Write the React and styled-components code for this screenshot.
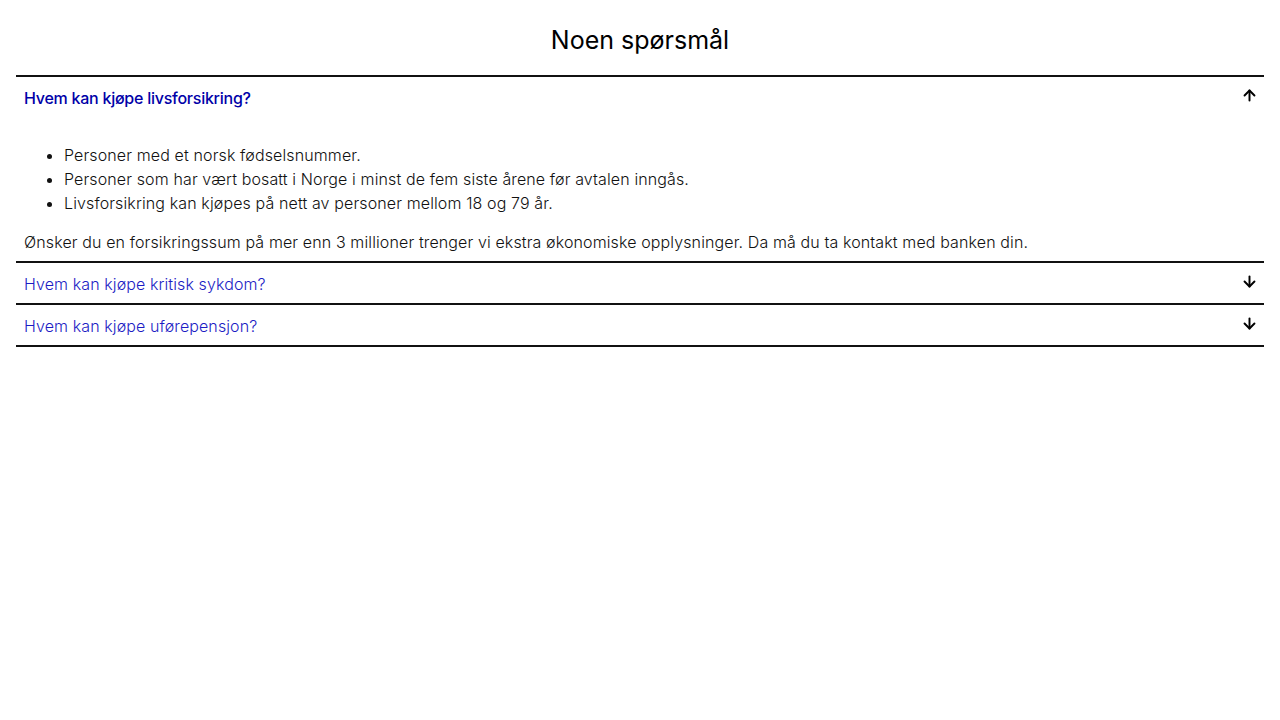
import React, { useState } from 'react';
import styled, { createGlobalStyle } from 'styled-components';
import { ArrowUp, ArrowDown } from 'lucide-react';

const GlobalStyle = createGlobalStyle`
  body {
    margin: 0;
    background: #ffffff;
    font-family: Inter, "Liberation Sans", sans-serif;
    color: #111111;
  }
`;

const Page = styled.div`
  padding: 0 16px;
`;

const Title = styled.h2`
  margin: 0;
  padding: 24px 0 19px;
  text-align: center;
  font-size: 25px;
  line-height: 32px;
  font-weight: 400;
  color: #000000;
`;

const List = styled.div`
  border-bottom: 2px solid #111111;
`;

const Item = styled.section`
  border-top: 2px solid #111111;
`;

const Header = styled.button`
  display: flex;
  align-items: center;
  justify-content: space-between;
  width: 100%;
  height: 40px;
  padding: 2px 8px 0;
  border: 0;
  background: none;
  cursor: pointer;
  font-family: inherit;
  font-size: 16px;
  text-align: left;
  color: ${(p) => (p.$open ? '#0000a8' : '#1c1cc4')};
  font-weight: ${(p) => (p.$open ? 500 : 350)};
  letter-spacing: ${(p) => (p.$open ? '-0.25px' : '0.1px')};
`;

const Arrow = styled.span`
  display: flex;
  align-self: flex-start;
  margin-top: 8px;
  margin-right: -2px;
  color: #000000;
`;

const Body = styled.div`
  padding: 26px 8px 7px;
  font-size: 16px;
  line-height: 24px;
  font-weight: 350;
  letter-spacing: 0.12px;
`;

const Bullets = styled.ul`
  margin: 0 0 15px;
  padding-left: 40px;
`;

const Para = styled.p`
  margin: 0;
`;

const faqs = [
  {
    q: 'Hvem kan kjøpe livsforsikring?',
    bullets: [
      'Personer med et norsk fødselsnummer.',
      'Personer som har vært bosatt i Norge i minst de fem siste årene før avtalen inngås.',
      'Livsforsikring kan kjøpes på nett av personer mellom 18 og 79 år.',
    ],
    text: 'Ønsker du en forsikringssum på mer enn 3 millioner trenger vi ekstra økonomiske opplysninger. Da må du ta kontakt med banken din.',
  },
  { q: 'Hvem kan kjøpe kritisk sykdom?', bullets: [], text: '' },
  { q: 'Hvem kan kjøpe uførepensjon?', bullets: [], text: '' },
];

export default function App() {
  const [open, setOpen] = useState(0);

  return (
    <Page>
      <GlobalStyle />
      <Title>Noen spørsmål</Title>
      <List>
        {faqs.map((f, i) => {
          const isOpen = open === i;
          return (
            <Item key={f.q}>
              <Header $open={isOpen} onClick={() => setOpen(isOpen ? -1 : i)}>
                <span>{f.q}</span>
                <Arrow>
                  {isOpen ? <ArrowUp size={17} strokeWidth={2.75} /> : <ArrowDown size={17} strokeWidth={2.75} />}
                </Arrow>
              </Header>
              {isOpen && (
                <Body>
                  <Bullets>
                    {f.bullets.map((b) => (
                      <li key={b}>{b}</li>
                    ))}
                  </Bullets>
                  <Para>{f.text}</Para>
                </Body>
              )}
            </Item>
          );
        })}
      </List>
    </Page>
  );
}
